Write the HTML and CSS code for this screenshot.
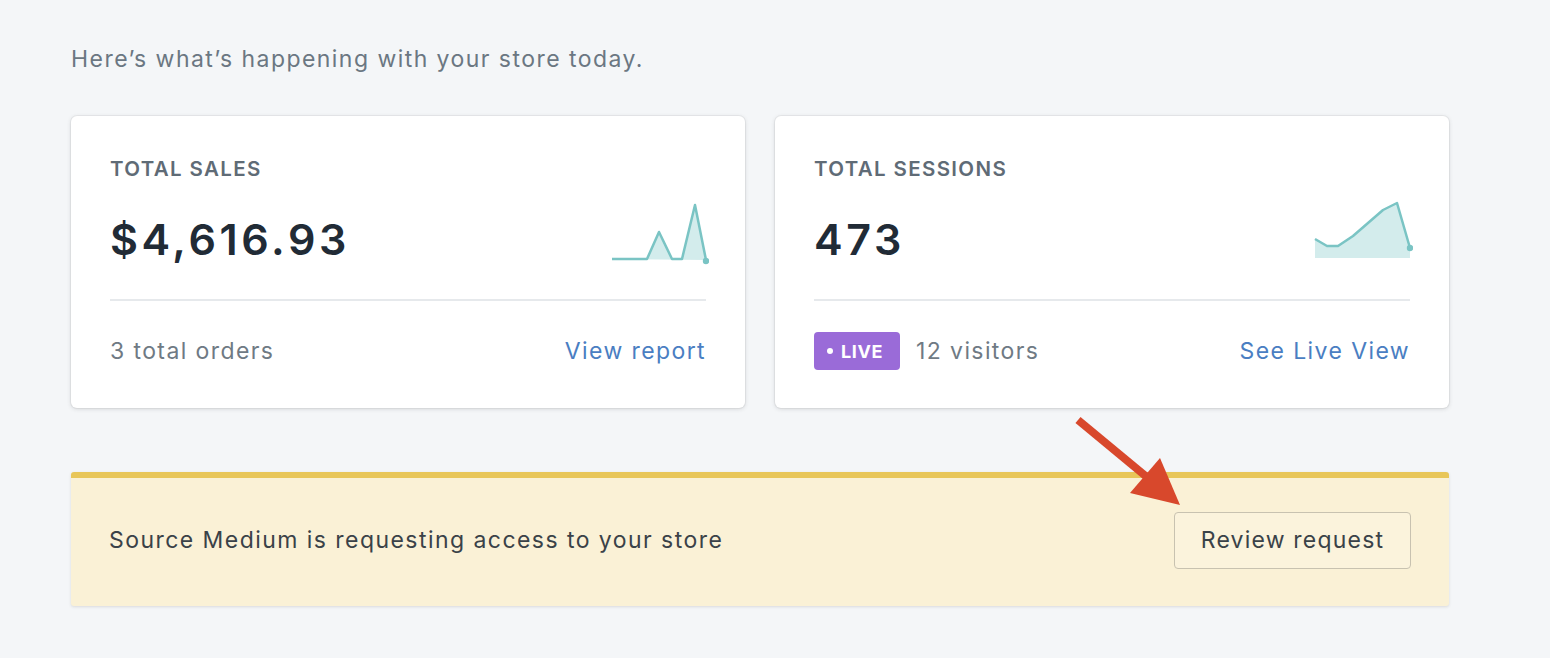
FILE: index.html
```html
<!DOCTYPE html>
<html>
<head>
<meta charset="utf-8">
<link rel="stylesheet" href="styles.css">
</head>
<body>
<main class="page">
  <p class="intro">Here’s what’s happening with your store today.</p>
  <div class="cards">
    <section class="card">
      <div class="label">TOTAL SALES</div>
      <div class="metric-row">
        <div class="metric">$4,616.93</div>
        <svg class="spark" width="100" height="70" viewBox="0 0 100 70">
          <path d="M3 58 L38 58 L50 31 L63 58 L73 58 L86 4 L97 59 Z" fill="#d3ecec"/>
          <path d="M3 58 L38 58 L50 31 L63 58 L73 58 L86 4 L97 59" fill="none" stroke="#7ac4c4" stroke-width="2.5" stroke-linejoin="round"/>
          <circle cx="97" cy="60" r="3.2" fill="#7ac4c4"/>
        </svg>
      </div>
      <hr class="divider">
      <div class="footer">
        <span class="muted">3 total orders</span>
        <a class="link" href="#">View report</a>
      </div>
    </section>
    <section class="card">
      <div class="label">TOTAL SESSIONS</div>
      <div class="metric-row">
        <div class="metric">473</div>
        <svg class="spark" width="100" height="70" viewBox="0 0 100 70">
          <path d="M2 38 L14 45 L25 45 L40 35 L70 9 L84 2 L97 47 L97 57 L2 57 Z" fill="#d3ecec"/>
          <path d="M2 38 L14 45 L25 45 L40 35 L70 9 L84 2 L97 47" fill="none" stroke="#7ac4c4" stroke-width="2.5" stroke-linejoin="round"/>
          <circle cx="97" cy="47" r="3.2" fill="#7ac4c4"/>
        </svg>
      </div>
      <hr class="divider">
      <div class="footer">
        <span class="live-wrap"><span class="badge"><span class="dot"></span>LIVE</span><span class="muted">12 visitors</span></span>
        <a class="link" href="#">See Live View</a>
      </div>
    </section>
  </div>
  <div class="banner">
    <span class="banner-text">Source Medium is requesting access to your store</span>
    <button class="btn">Review request</button>
  </div>
  <svg class="arrow" width="130" height="110" viewBox="0 0 130 110">
    <line x1="8" y1="9" x2="78" y2="67" stroke="#d8482c" stroke-width="8"/>
    <polygon points="60,82 90,47 110,94" fill="#d8482c"/>
  </svg>
</main>
</body>
</html>
```

FILE: styles.css
```css
html, body {
  margin: 0;
  padding: 0;
  background: #f4f6f8;
}
body {
  font-family: Inter, "Noto Sans", "Liberation Sans", sans-serif;
  color: #212b36;
  width: 1550px;
  height: 658px;
  overflow: hidden;
}
.page {
  position: relative;
  padding: 42px 101px 0 71px;
}
.intro {
  margin: 0 0 40px;
  font-size: 23px;
  line-height: 34px;
  color: #6b7782;
  letter-spacing: 1.45px;
}
.cards {
  display: flex;
  gap: 30px;
}
.card {
  flex: 1;
  background: #fff;
  border-radius: 6px;
  box-shadow: 0 0 0 1px rgba(63,63,68,0.05), 0 1px 4px rgba(63,63,68,0.18);
  padding: 41px 39px 0;
  height: 292px;
  box-sizing: border-box;
}
.label {
  font-size: 20.5px;
  font-weight: 600;
  color: #5f6b76;
  line-height: 24px;
  letter-spacing: 1.35px;
}
.metric-row {
  display: flex;
  justify-content: space-between;
  align-items: flex-start;
  margin-top: 28px;
  height: 88px;
}
.metric {
  font-size: 43px;
  font-weight: 600;
  line-height: 60px;
  color: #212b36;
  letter-spacing: 3.6px;
}
.spark {
  margin-top: -8px;
  margin-right: -3px;
}
.divider {
  border: 0;
  border-top: 2px solid #e6e9ec;
  margin: 2px 0 0;
}
.footer {
  display: flex;
  justify-content: space-between;
  align-items: center;
  height: 100px;
  font-size: 23px;
  letter-spacing: 1.4px;
}
.muted {
  color: #6f7a84;
}
.link {
  color: #4a7ec2;
  text-decoration: none;
}
.live-wrap {
  display: flex;
  align-items: center;
  gap: 16px;
}
.badge {
  display: inline-flex;
  align-items: center;
  gap: 8px;
  background: #9a6bd8;
  color: #fff;
  font-size: 18px;
  font-weight: 700;
  border-radius: 4px;
  height: 38px;
  padding: 0 17px 0 13px;
  box-sizing: border-box;
  letter-spacing: 0.6px;
}
.dot {
  width: 6px;
  height: 6px;
  border-radius: 50%;
  background: #fff;
}
.banner {
  margin-top: 64px;
  height: 134px;
  box-sizing: border-box;
  background: #faf1d6;
  border-top: 6px solid #e8c659;
  border-radius: 3px;
  box-shadow: 0 1px 3px rgba(63,63,68,0.15);
  display: flex;
  justify-content: space-between;
  align-items: center;
  padding: 0 38px 4px 38px;
}
.banner-text {
  font-size: 23px;
  color: #3a4248;
  letter-spacing: 1.45px;
}
.btn {
  font-family: inherit;
  font-size: 23px;
  letter-spacing: 1.2px;
  color: #3a4248;
  background: #fbf3dc;
  border: 1.5px solid #c8c2b0;
  border-radius: 4px;
  height: 57px;
  width: 237px;
  padding: 0;
}
.arrow {
  position: absolute;
  left: 1070px;
  top: 411px;
}
```
